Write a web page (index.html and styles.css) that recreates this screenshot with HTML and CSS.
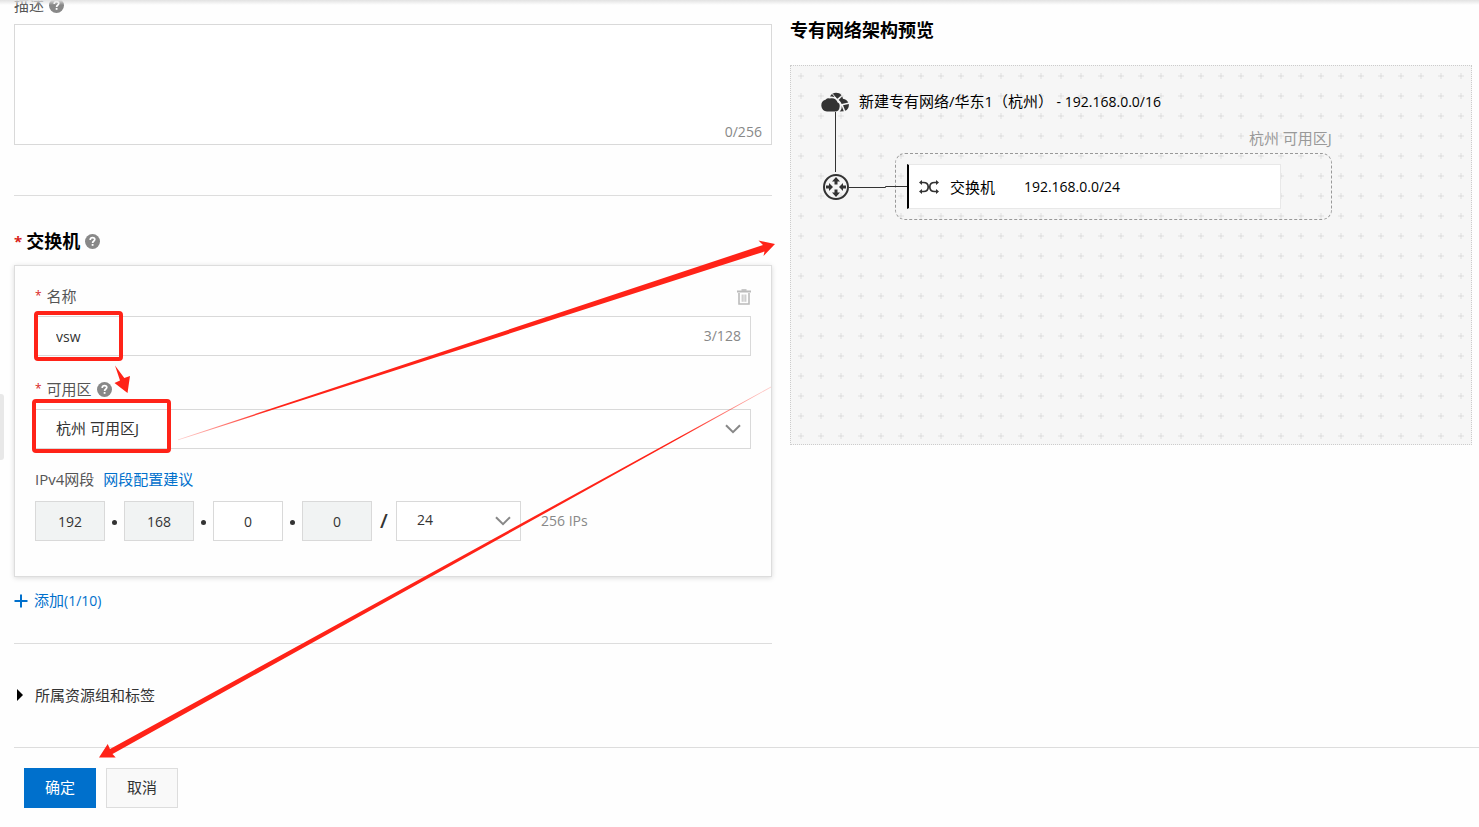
FILE: index.html
```html
<!DOCTYPE html>
<html lang="zh-CN">
<head>
    <meta charset="UTF-8">
    <meta name="viewport" content="width=device-width, initial-scale=1.0">
    <title>新建专有网络</title>
    <link rel="stylesheet" href="styles.css">
</head>
<body>
    <svg class="sprite" aria-hidden="true">
        <symbol id="icon-help" viewBox="0 0 15 15">
            <circle cx="7.5" cy="7.5" r="7.5" fill="#888"/>
            <path d="M5.2 5.9C5.2 4.4 6.2 3.6 7.5 3.6S9.8 4.4 9.8 5.6C9.8 7 7.6 7 7.6 8.9" fill="none" stroke="#fff" stroke-width="1.7"/>
            <rect x="6.7" y="10" width="1.8" height="1.8" fill="#fff"/>
        </symbol>
        <symbol id="icon-chevron" viewBox="0 0 16 10">
            <path d="M1 1.2L8 8.2L15 1.2" fill="none" stroke="#888" stroke-width="2"/>
        </symbol>
    </svg>

    <div class="side-handle"></div>

    <form class="page">
        <div class="columns">
            <div class="form-column">
                <div class="label-row">
                    <label for="description">描述</label>
                    <svg class="help"><use href="#icon-help"/></svg>
                </div>
                <div class="description-box">
                    <textarea id="description"></textarea>
                    <span class="counter counter-bottom">0/256</span>
                </div>

                <hr class="divider">

                <h2 class="section-title">
                    <span class="required">*</span>交换机
                    <svg class="help"><use href="#icon-help"/></svg>
                </h2>

                <div class="card">
                    <div class="field">
                        <div class="label-row">
                            <span class="required">*</span>
                            <label for="vsw-name">名称</label>
                            <button type="button" class="delete-button" aria-label="删除">
                                <svg width="14" height="16" viewBox="0 0 14 16" fill="none" stroke="#bbb">
                                    <path d="M0 2.5H14" stroke-width="2"/>
                                    <path d="M4.5 1H9.5" stroke-width="1.6"/>
                                    <path d="M2 4V15H12V4" stroke-width="1.6"/>
                                    <path d="M5.2 5.5V12.8M7 5.5V12.8M8.8 5.5V12.8" stroke-width="1"/>
                                </svg>
                            </button>
                        </div>
                        <div class="control">
                            <input type="text" id="vsw-name" value="vsw">
                            <span class="counter">3/128</span>
                        </div>
                    </div>

                    <div class="field">
                        <div class="label-row">
                            <span class="required">*</span>
                            <label for="zone">可用区</label>
                            <svg class="help"><use href="#icon-help"/></svg>
                        </div>
                        <div class="control">
                            <select id="zone">
                                <option>杭州 可用区J</option>
                            </select>
                            <svg class="chevron"><use href="#icon-chevron"/></svg>
                        </div>
                    </div>

                    <div class="field">
                        <div class="label-row">
                            <label for="ip-3">IPv4网段</label>
                            <a class="link" href="#">网段配置建议</a>
                        </div>
                        <div class="ip-row">
                            <input type="text" class="ip-part" value="192" aria-label="第一段" disabled>
                            <span class="dot"></span>
                            <input type="text" class="ip-part" value="168" aria-label="第二段" disabled>
                            <span class="dot"></span>
                            <input type="text" class="ip-part" id="ip-3" value="0">
                            <span class="dot"></span>
                            <input type="text" class="ip-part" value="0" aria-label="第四段" disabled>
                            <span class="slash">/</span>
                            <div class="control mask">
                                <select class="latin" aria-label="掩码">
                                    <option>24</option>
                                </select>
                                <svg class="chevron"><use href="#icon-chevron"/></svg>
                            </div>
                            <span class="ip-count">256 IPs</span>
                        </div>
                    </div>
                </div>

                <button type="button" class="add-button">
                    <svg width="14" height="14" viewBox="0 0 14 14" fill="none" stroke="#0070cc" stroke-width="2">
                        <path d="M7 0.5V13.5M0.5 7H13.5"/>
                    </svg>
                    <span>添加<span class="latin">(1/10)</span></span>
                </button>

                <hr class="divider">

                <details class="more">
                    <summary>
                        <svg width="6" height="12" viewBox="0 0 6 12"><path d="M0 0L6 6L0 12Z"/></svg>
                        所属资源组和标签
                    </summary>
                </details>
            </div>

            <div class="preview-column">
                <h2 class="preview-title">专有网络架构预览</h2>
                <div class="preview">
                    <svg class="connectors" width="120" height="160" viewBox="0 0 120 160" fill="none" stroke="#333">
                        <path d="M44.5 46V106"/>
                        <path d="M58 121.5H94.5V120.5H116" />
                        <circle cx="45" cy="121" r="12" stroke-width="2"/>
                        <g fill="#333" stroke="none">
                            <path d="M45 111L49 115.5H46.5V118.5H43.5V115.5H41Z"/>
                            <path d="M45 131L49 126.5H46.5V123.5H43.5V126.5H41Z"/>
                            <path d="M42 121L38 117V119.5H35V122.5H38V125Z"/>
                            <path d="M48 121L52 117V119.5H55V122.5H52V125Z"/>
                        </g>
                    </svg>

                    <div class="vpc">
                        <svg width="28" height="20" viewBox="0 0 28 20">
                            <path d="M6 19.5A6 6 0 0 1 4.5 7.8Q6.5 5.8 9 6.6C12.5 5.4 16 7.6 16.6 10.6C18.4 11.4 19 13 18.6 15C18.4 18 16.6 19.5 14.5 19.5Z" fill="#333"/>
                            <path d="M9 4.6C10.4 2 12.4 0.8 15 0.8C17.4 0.8 19.2 1.6 20.4 3.2L16.4 6.8C14.6 5 12 4.2 9 4.6Z" fill="#333"/>
                            <path d="M21.2 4.4C21.7 5.3 21.9 6 21.9 6.8C24.4 7.2 26.4 8.6 27.3 10.6L20.6 12C20 10.4 19 9 17.6 8Z" fill="#333"/>
                            <path d="M27.8 12C28.2 15 26.8 17.8 24.2 18.8L22 13.2ZM20.6 13.8L22.8 19.3L18.6 19.5C20.4 17.8 20.9 16 20.6 13.8Z" fill="#333"/>
                            <path d="M11.5 2L15 6" stroke="#f6f6f6" stroke-width="1"/>
                        </svg>
                        <span>新建专有网络/华东1（杭州）<span class="latin"> - 192.168.0.0/16</span></span>
                    </div>

                    <div class="zone">
                        <div class="zone-name">杭州 可用区J</div>
                        <div class="zone-box">
                            <div class="vswitch">
                                <svg width="20" height="14" viewBox="0 0 20 14">
                                    <path d="M2 2.5H4.5C8 2.5 9.2 5 9.2 7S8 11.5 4.5 11.5H2M18 2.5H15.5C12 2.5 10.8 5 10.8 7S12 11.5 15.5 11.5H18" fill="none" stroke="#333" stroke-width="1.7"/>
                                    <path d="M17 0L20 2.5L17 5ZM17 9L20 11.5L17 14ZM3 0V5L0 2.5ZM3 9V14L0 11.5Z" fill="#333"/>
                                </svg>
                                <span class="vswitch-name">交换机</span>
                                <span class="latin">192.168.0.0/24</span>
                            </div>
                        </div>
                    </div>
                </div>
            </div>
        </div>

        <div class="footer">
            <button type="submit" class="button button-primary">确定</button>
            <button type="button" class="button">取消</button>
        </div>
    </form>

    <!-- Annotations drawn over the form -->
    <svg class="annotations" width="800" height="800" viewBox="0 0 800 800" aria-hidden="true">
        <defs>
            <linearGradient id="fade-up" gradientUnits="userSpaceOnUse" x1="178" y1="440" x2="270" y2="410">
                <stop offset="0" stop-color="#ff2318" stop-opacity="0.2"/>
                <stop offset="1" stop-color="#ff2318"/>
            </linearGradient>
            <linearGradient id="fade-down" gradientUnits="userSpaceOnUse" x1="771" y1="387" x2="680" y2="437">
                <stop offset="0" stop-color="#ff2318" stop-opacity="0.2"/>
                <stop offset="1" stop-color="#ff2318"/>
            </linearGradient>
        </defs>
        <g fill="none" stroke="#ff2318" stroke-width="4">
            <rect x="36" y="313" width="85" height="46" rx="2"/>
            <rect x="34" y="401" width="135" height="50" rx="2"/>
        </g>
        <path d="M115 365.5L124.3 378L130 376L127.5 393L114.5 383L120 380.5Z" fill="#ff2318"/>
        <path d="M178 439.6L763 245L758.5 240.5L775 244L763.5 256L764.5 251.5L178 440.3Z" fill="url(#fade-up)"/>
        <path d="M771 386.6L110 749L107.7 744L99 757.5L115.7 757.5L112.5 754L771 387.4Z" fill="url(#fade-down)"/>
    </svg>
</body>
</html>
```

FILE: styles.css
```css
* {
    box-sizing: border-box;
}
body {
    margin: 0;
    background-color: #fefefe;
    font-family: "Open Sans", "Noto Sans CJK SC", sans-serif;
    font-size: 15px;
    line-height: 20px;
    color: #333;
    overflow: hidden;
}
body::before {
    content: "";
    position: absolute;
    top: 0;
    left: 0;
    right: 0;
    height: 5px;
    background: linear-gradient(#e2e2e2, rgba(255, 255, 255, 0));
}
input,
select,
textarea,
button {
    font: inherit;
    color: inherit;
}
.sprite {
    position: absolute;
    width: 0;
    height: 0;
}
.latin {
    font-size: 14px;
    white-space: pre;
}
.side-handle {
    position: absolute;
    left: 0;
    top: 394px;
    width: 4px;
    height: 66px;
    background-color: #e8e8e8;
    border-radius: 0 3px 3px 0;
}

/* Layout */
.page {
    margin-top: -5px;
    padding-left: 14px;
}
.columns {
    display: flex;
    gap: 18px;
    padding-right: 7px;
}
.form-column {
    flex: 10;
    min-width: 0;
}
.preview-column {
    flex: 9;
    min-width: 0;
    padding-top: 24px;
}
.divider {
    margin: 0;
    border: 0;
    border-top: 1px solid #ddd;
}

/* Fields */
.label-row {
    display: flex;
    align-items: center;
    height: 20px;
    color: #555;
}
.help {
    width: 15px;
    height: 15px;
    margin-left: 5px;
    flex: none;
}
.required {
    margin-right: 5px;
    color: #d9221c;
    font-size: 12px;
}
.description-box {
    position: relative;
    margin: 9px 0 50px;
}
.description-box textarea {
    display: block;
    width: 100%;
    height: 121px;
    padding: 8px 20px;
    border: 1px solid #d9d9d9;
    background-color: #fff;
    resize: none;
}
.counter {
    position: absolute;
    right: 10px;
    top: 10px;
    font-size: 14px;
    color: #888;
}
.counter-bottom {
    top: auto;
    bottom: 3px;
}
.section-title {
    display: flex;
    align-items: center;
    margin: 33px 0 12px;
    font-size: 18px;
    line-height: 24px;
    color: #000;
}
.section-title .required {
    margin-right: 4px;
    font-size: 15px;
}
.card {
    padding: 20px 20px 35px;
    border: 1px solid #ddd;
    background-color: #fefefe;
    box-shadow: 0 1px 5px rgba(0, 0, 0, 0.15);
}
.field {
    margin-bottom: 23px;
}
.field:nth-child(2) {
    margin-bottom: 20px;
}
.field:last-child {
    margin-bottom: 0;
}
.control {
    position: relative;
    margin-top: 10px;
}
.control input,
.control select {
    display: block;
    width: 100%;
    height: 40px;
    padding: 0 20px;
    border: 1px solid #d9d9d9;
    border-radius: 0;
    background-color: #fff;
    appearance: none;
}
.control select {
    padding-bottom: 2px;
}
.control input,
.control .latin {
    font-size: 14px;
}
.chevron {
    position: absolute;
    right: 10px;
    top: 15px;
    width: 16px;
    height: 10px;
    pointer-events: none;
}
.delete-button {
    display: flex;
    margin-left: auto;
    padding: 2px 0 0;
    border: 0;
    background: none;
}
.link {
    margin-left: 9px;
    color: #0070cc;
    text-decoration: none;
}
.ip-row {
    display: flex;
    align-items: center;
    margin-top: 12px;
}
.ip-part {
    width: 70px;
    height: 40px;
    padding: 0;
    border: 1px solid #d9d9d9;
    background-color: #fff;
    font-size: 14px;
    text-align: center;
}
.ip-part:disabled {
    background-color: #f1f3f3;
    color: #333;
}
.dot {
    width: 5px;
    height: 5px;
    margin: 3px 7px 0;
    border-radius: 50%;
    background-color: #333;
}
.slash {
    width: 24px;
    font-size: 20px;
    font-weight: 600;
    text-align: center;
}
.mask {
    width: 125px;
    margin-top: 0;
}
.ip-count {
    margin-left: 20px;
    font-size: 14px;
    color: #888;
}
.add-button {
    display: flex;
    align-items: center;
    gap: 6px;
    margin: 13px 0 32px;
    padding: 0;
    border: 0;
    background: none;
    color: #0070cc;
}
.more {
    padding: 41px 0 42px;
}
.more summary {
    display: flex;
    align-items: center;
    gap: 12px;
    padding-left: 3px;
    list-style: none;
}

/* Preview */
.preview-title {
    margin: 0 0 24px;
    font-size: 18px;
    line-height: 22px;
    color: #000;
}
.preview {
    position: relative;
    height: 380px;
    padding-top: 25px;
    border: 1px dotted #ccc;
    background: #f6f6f6 url("data:image/svg+xml,%3Csvg xmlns='http://www.w3.org/2000/svg' width='20' height='20'%3E%3Cpath d='M7 9h6v2h-6zM9 7h2v6h-2z' fill='%23ebebeb'/%3E%3Cpath d='M9 9h2v2h-2z' fill='%23e2e2e2'/%3E%3C/svg%3E") 0 0;
    color: #000;
}
.connectors {
    position: absolute;
    left: 0;
    top: 0;
}
.vpc {
    display: flex;
    align-items: center;
    gap: 10px;
    padding-left: 30px;
}
.zone {
    max-width: 541px;
    margin-top: 16px;
    padding-left: 104px;
}
.zone-name {
    color: #999;
    text-align: right;
}
.zone-box {
    margin-top: 5px;
    padding: 10px 50px 10px 11px;
    border: 1px dashed #999;
    border-radius: 10px;
}
.vswitch {
    display: flex;
    align-items: center;
    height: 45px;
    padding-left: 10px;
    border: 1px solid #e8e8e8;
    border-left: 2px solid #000;
    background-color: #fff;
}
.vswitch-name {
    margin: 0 29px 0 11px;
}

/* Footer */
.footer {
    display: flex;
    gap: 10px;
    padding: 20px 10px;
    border-top: 1px solid #ddd;
}
.button {
    width: 72px;
    height: 40px;
    padding: 0 0 2px;
    border: 1px solid #ddd;
    background-color: #f9f9f9;
}
.button-primary {
    border-color: #0070cc;
    background-color: #0070cc;
    color: #fff;
}
.annotations {
    position: absolute;
    left: 0;
    top: 0;
    pointer-events: none;
}
```
